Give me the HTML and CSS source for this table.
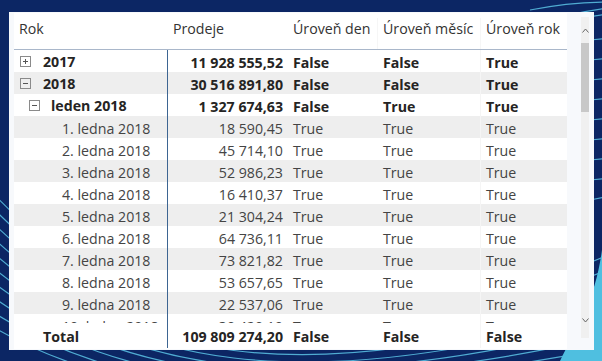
FILE: index.html
```html
<!DOCTYPE html>
<html lang="cs">
<head>
<meta charset="utf-8">
<link rel="stylesheet" href="styles.css">
</head>
<body>
<svg class="bg" width="602" height="361" viewBox="0 0 602 361" xmlns="http://www.w3.org/2000/svg">
  <rect width="602" height="361" fill="#0c2664"/>
  <g fill="none" stroke="#5cc4e6" stroke-width="1.2" opacity="0.85">
    <path d="M-10 190 C 120 330, 300 390, 620 250"/>
    <path d="M-10 205 C 120 340, 300 395, 620 265"/>
    <path d="M-10 220 C 120 350, 300 398, 620 280"/>
    <path d="M-10 235 C 120 358, 300 400, 620 295"/>
    <path d="M-10 250 C 120 366, 300 402, 620 310"/>
    <path d="M-10 265 C 120 374, 300 404, 620 322"/>
    <path d="M-10 280 C 120 382, 300 406, 620 334"/>
    <path d="M-10 295 C 120 390, 300 408, 620 346"/>
    <path d="M-10 310 C 120 398, 300 410, 620 356"/>
    <path d="M-10 325 C 120 404, 300 412, 620 366"/>
    <path d="M520 30 C 560 15, 590 10, 610 8"/>
    <path d="M510 36 C 560 20, 590 16, 610 14"/>
    <path d="M530 10 C 560 4, 590 2, 610 2"/>
    <path d="M590 40 L610 38"/><path d="M590 60 L610 58"/><path d="M590 80 L610 78"/>
    <path d="M590 100 L610 98"/><path d="M590 120 L610 118"/><path d="M590 140 L610 138"/>
    <path d="M590 160 L610 158"/><path d="M590 180 L610 178"/><path d="M590 200 L610 196"/>
  </g>
  <path d="M560 361 C 580 320, 595 300, 602 250 L602 361 Z" fill="#4fbfe0"/>
</svg>

<div class="panel">
  <div class="table">
    <div class="row head">
      <div class="c c1">Rok</div>
      <div class="c c2">Prodeje</div>
      <div class="c c3">Úroveň den</div>
      <div class="c c4">Úroveň měsíc</div>
      <div class="c c5">Úroveň rok</div>
    </div>
    <div class="body">
      <div class="row b">
        <div class="c c1 lvl0"><svg class="tg" width="11" height="11" viewBox="0 0 11 11"><rect x="0.5" y="0.5" width="10" height="10" fill="none" stroke="#8a8a8a"/><path d="M3 5.5H8M5.5 3V8" stroke="#555"/></svg>2017</div>
        <div class="c c2">11 928 555,52</div><div class="c c3">False</div><div class="c c4">False</div><div class="c c5">True</div>
      </div>
      <div class="row b alt">
        <div class="c c1 lvl0"><svg class="tg" width="11" height="11" viewBox="0 0 11 11"><rect x="0.5" y="0.5" width="10" height="10" fill="none" stroke="#8a8a8a"/><path d="M3 5.5H8" stroke="#555"/></svg>2018</div>
        <div class="c c2">30 516 891,80</div><div class="c c3">False</div><div class="c c4">False</div><div class="c c5">True</div>
      </div>
      <div class="row b">
        <div class="c c1 lvl1"><svg class="tg" width="11" height="11" viewBox="0 0 11 11"><rect x="0.5" y="0.5" width="10" height="10" fill="none" stroke="#8a8a8a"/><path d="M3 5.5H8" stroke="#555"/></svg>leden 2018</div>
        <div class="c c2">1 327 674,63</div><div class="c c3">False</div><div class="c c4">True</div><div class="c c5">True</div>
      </div>
      <div class="row alt"><div class="c c1 lvl2">1. ledna 2018</div><div class="c c2">18 590,45</div><div class="c c3">True</div><div class="c c4">True</div><div class="c c5">True</div></div>
      <div class="row"><div class="c c1 lvl2">2. ledna 2018</div><div class="c c2">45 714,10</div><div class="c c3">True</div><div class="c c4">True</div><div class="c c5">True</div></div>
      <div class="row alt"><div class="c c1 lvl2">3. ledna 2018</div><div class="c c2">52 986,23</div><div class="c c3">True</div><div class="c c4">True</div><div class="c c5">True</div></div>
      <div class="row"><div class="c c1 lvl2">4. ledna 2018</div><div class="c c2">16 410,37</div><div class="c c3">True</div><div class="c c4">True</div><div class="c c5">True</div></div>
      <div class="row alt"><div class="c c1 lvl2">5. ledna 2018</div><div class="c c2">21 304,24</div><div class="c c3">True</div><div class="c c4">True</div><div class="c c5">True</div></div>
      <div class="row"><div class="c c1 lvl2">6. ledna 2018</div><div class="c c2">64 736,11</div><div class="c c3">True</div><div class="c c4">True</div><div class="c c5">True</div></div>
      <div class="row alt"><div class="c c1 lvl2">7. ledna 2018</div><div class="c c2">73 821,82</div><div class="c c3">True</div><div class="c c4">True</div><div class="c c5">True</div></div>
      <div class="row"><div class="c c1 lvl2">8. ledna 2018</div><div class="c c2">53 657,65</div><div class="c c3">True</div><div class="c c4">True</div><div class="c c5">True</div></div>
      <div class="row alt"><div class="c c1 lvl2">9. ledna 2018</div><div class="c c2">22 537,06</div><div class="c c3">True</div><div class="c c4">True</div><div class="c c5">True</div></div>
      <div class="row"><div class="c c1 lvl2">10. ledna 2018</div><div class="c c2">30 420,19</div><div class="c c3">True</div><div class="c c4">True</div><div class="c c5">True</div></div>
    </div>
    <div class="row total">
      <div class="c c1 lvl0">Total</div>
      <div class="c c2">109 809 274,20</div><div class="c c3">False</div><div class="c c4">False</div><div class="c c5">False</div>
    </div>
  </div>
  <div class="scroll">
    <div class="track">
      <div class="arrow"><svg width="7" height="5" viewBox="0 0 7 5"><path d="M0.5 4.5L3.5 1L6.5 4.5" fill="none" stroke="#666"/></svg></div>
      <div class="thumb"></div>
      <div class="spacer"></div>
      <div class="arrow down"><svg width="7" height="5" viewBox="0 0 7 5"><path d="M0.5 0.5L3.5 4L6.5 0.5" fill="none" stroke="#666"/></svg></div>
    </div>
  </div>
</div>
</body>
</html>
```

FILE: styles.css
```css
* { box-sizing: border-box; }
html, body { margin: 0; padding: 0; }
body {
  width: 602px;
  height: 361px;
  overflow: hidden;
  position: relative;
  background: #0c2664;
  font-family: "Open Sans", "Noto Sans", sans-serif;
  font-size: 14.2px;
}
.bg { position: absolute; left: 0; top: 0; z-index: 0; }
.panel {
  position: relative;
  z-index: 1;
  margin: 12px 0 0 9px;
  width: 585px;
  height: 338px;
  background: #f7f9fc;
  padding: 1px 0 0 5px;
  display: flex;
}
.table {
  width: 553px;
  height: 336px;
  background: #fff;
  display: flex;
  flex-direction: column;
}
.row {
  display: grid;
  grid-template-columns: 154px 120px 90px 102px 87px;
  height: 22px;
  line-height: 25px;
  color: #444;
  white-space: nowrap;
}
.row.alt { background: #eeeeee; }
.row.b { font-weight: 700; color: #252423; }
.c { overflow: hidden; }
.c1 { border-right: 1px solid #3d6592; }
.c2 { text-align: right; padding-right: 5px; }
.c3 { padding-left: 5px; }
.c4 { padding-left: 5px; }
.c5 { padding-left: 5px; border-left: 1px solid #f5f5f5; }
.head {
  height: 37px;
  line-height: 22px;
  padding-top: 5px;
  border-bottom: 1px solid #a9b7ca;
  color: #333;
}
.head .c1 { border-right: none; padding-left: 5px; }
.head .c2 { text-align: left; padding-left: 5px; padding-right: 0; }
.head .c3 { border-right: 1px solid #f6f6f6; }
.head .c5 { border-left: 1px solid #f6f6f6; }
.body { height: 273px; overflow: hidden; }
.lvl0 { padding-left: 6px; display: flex; align-items: center; }
.lvl1 { padding-left: 15px; display: flex; align-items: center; }
.lvl2 { padding-left: 48px; }
.tg { flex: none; margin-right: 12px; margin-top: 0; }
.lvl1 .tg { margin-right: 11px; }
.total {
  height: 25px;
  line-height: 28px;
  font-weight: 700;
  color: #252423;
}
.total .lvl0 { padding-left: 29px; display: block; }
.scroll {
  width: 27px;
  padding: 4px 0 0 14px;
}
.track {
  width: 8px;
  height: 321px;
  background: #f0f0f0;
  display: flex;
  flex-direction: column;
}
.arrow {
  height: 26px;
  display: flex;
  align-items: center;
  justify-content: center;
}
.arrow.down { height: 24px; align-items: flex-start; padding-top: 4px; }
.thumb { height: 69px; background: #c8c8c8; }
.spacer { flex: 1; }
```
